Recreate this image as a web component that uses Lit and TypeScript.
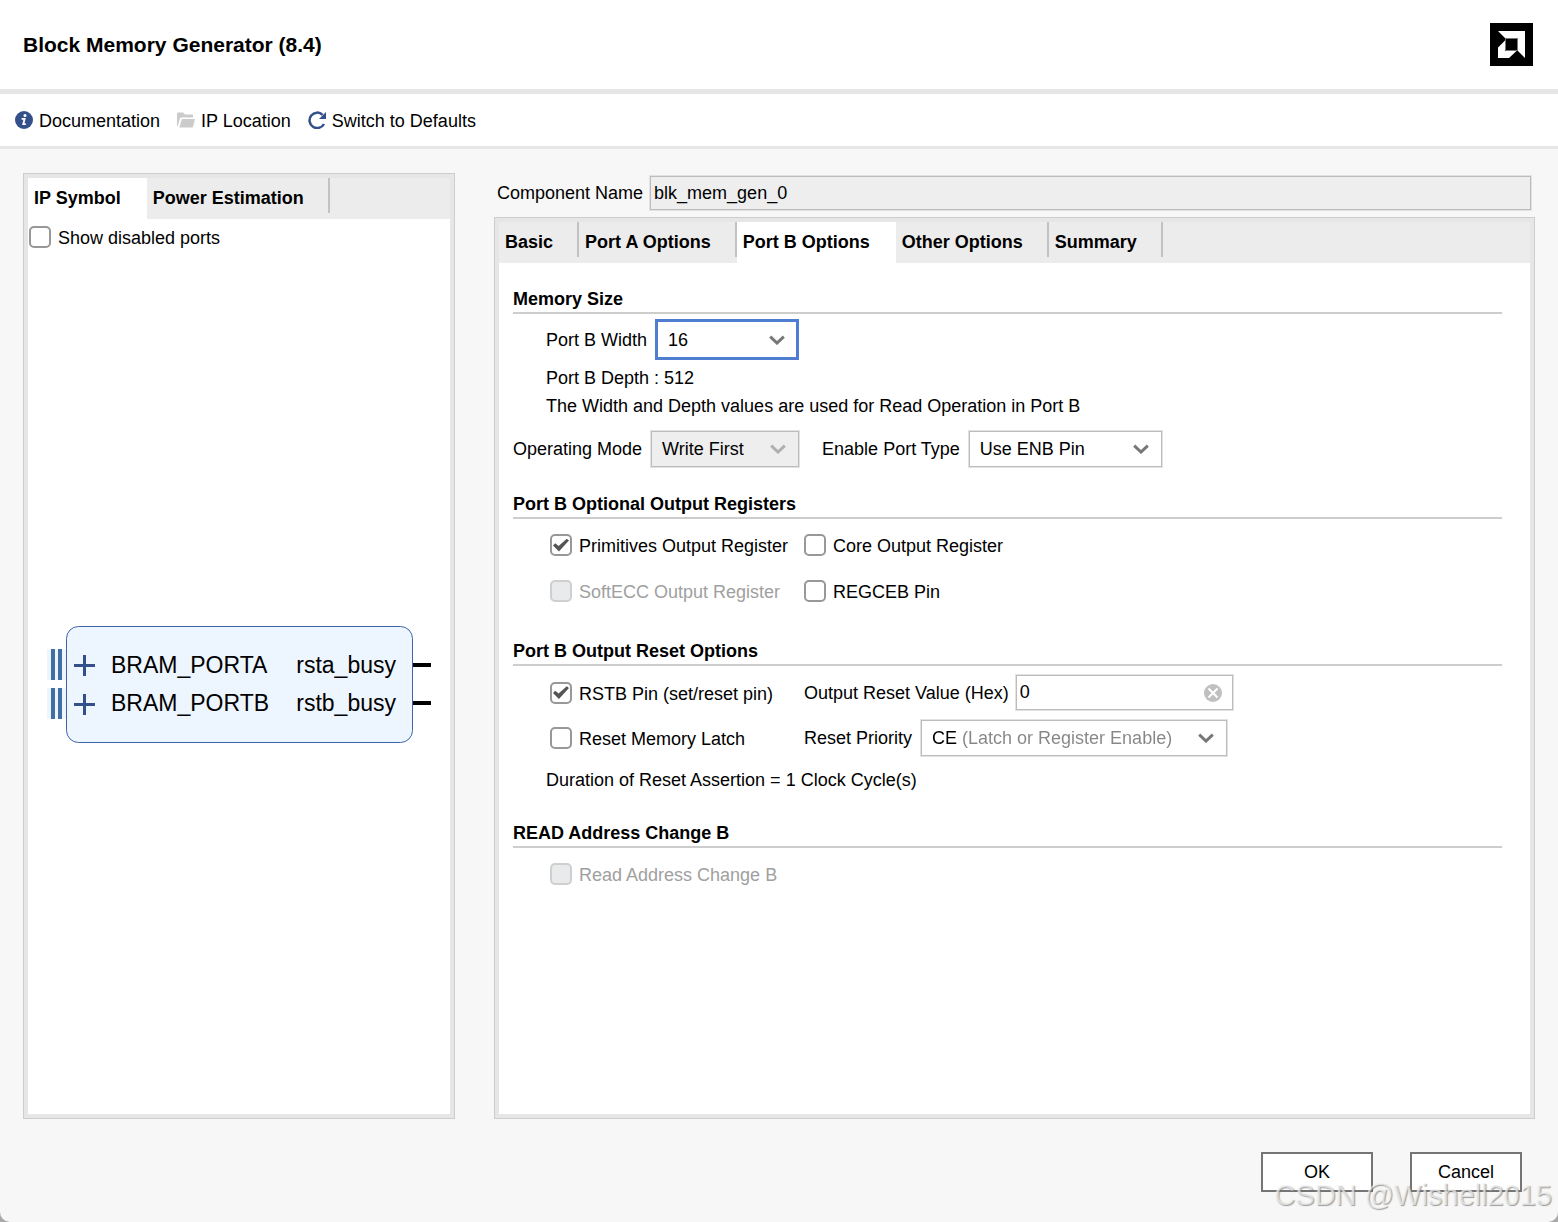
import { LitElement, html, css, svg, nothing } from "lit";
import { customElement, property, state } from "lit/decorators.js";
import { classMap } from "lit/directives/class-map.js";

const base = css`
  *,
  *::before,
  *::after {
    box-sizing: border-box;
  }
  button,
  input,
  select {
    font: inherit;
    color: inherit;
    margin: 0;
  }
`;

const fieldLine = css`
  .line {
    border: 1px solid #e2e2e2;
    box-shadow: inset 0 0 0 1px #bcbcbc;
  }
`;

@customElement("check-option")
class CheckOption extends LitElement {
  @property() label = "";
  @property({ type: Boolean }) checked = false;
  @property({ type: Boolean }) disabled = false;

  static styles = [
    base,
    css`
      :host {
        display: block;
      }
      .option {
        display: flex;
        align-items: center;
        gap: 7px;
        line-height: 24px;
        white-space: nowrap;
      }
      .text {
        padding-top: 2px;
        line-height: 22px;
      }
      .box {
        appearance: none;
        flex: none;
        width: 22px;
        height: 22px;
        border: 2px solid #989898;
        border-radius: 5px;
        background: #fff;
        display: grid;
        place-items: center;
      }
      .box:checked::before {
        content: "";
        width: 16px;
        height: 13px;
        background: #555;
        clip-path: polygon(0 54%, 14% 36%, 35% 58%, 86% 2%, 100% 16%, 37% 100%);
      }
      .box:disabled {
        background: #e9eaec;
        border-color: #cfcfcf;
      }
      .disabled {
        color: #a0a0a0;
      }
    `,
  ];

  render() {
    return html`<label class=${classMap({ option: true, disabled: this.disabled })}>
      <input
        class="box"
        type="checkbox"
        .checked=${this.checked}
        ?disabled=${this.disabled}
        @change=${(e: Event) => (this.checked = (e.target as HTMLInputElement).checked)}
      /><span class="text">${this.label}</span>
    </label>`;
  }
}

@customElement("select-field")
class SelectField extends LitElement {
  @property() label = "";
  @property({ type: Array }) options: string[] = [];
  @property({ type: Boolean }) disabled = false;
  @property({ type: Boolean }) active = false;
  @property() size = "small";
  @property({ type: Boolean }) hinted = false;

  static styles = [
    base,
    fieldLine,
    css`
      :host {
        display: block;
      }
      .row {
        display: flex;
        align-items: center;
        gap: 8px;
        white-space: nowrap;
      }
      .frame {
        display: grid;
        align-items: center;
        background: #fff;
      }
      .frame > * {
        grid-area: 1 / 1;
      }
      .small {
        width: 150px;
      }
      .medium {
        width: 195px;
      }
      .large {
        width: 308px;
      }
      .select {
        appearance: none;
        width: 100%;
        height: 38px;
        padding: 0 40px 0 11px;
        border-radius: 0;
        background: transparent;
        outline: none;
        opacity: 1;
      }
      .select:disabled {
        background: #eee;
        color: #000;
      }
      .active {
        width: 144px;
      }
      .active .select {
        height: 41px;
        border: 3px solid #4f7dd0;
        box-shadow: none;
        padding-left: 10px;
      }
      /* The value is black, its explanation in brackets grey. */
      .hinted .select {
        background: linear-gradient(to right, #000 38px, #868686 38px);
        background-clip: text;
        -webkit-text-fill-color: transparent;
      }
      .hinted option {
        -webkit-text-fill-color: #000;
      }
      .chevron {
        justify-self: end;
        margin-right: 14px;
        pointer-events: none;
        fill: none;
        stroke: #777;
        stroke-width: 3;
      }
      .off {
        stroke: #b0b0b0;
      }
    `,
  ];

  render() {
    const frame = { frame: true, active: this.active, hinted: this.hinted, [this.size]: !this.active };
    return html`<div class="row">
      <label for="field">${this.label}</label>
      <div class=${classMap(frame)}>
        <select id="field" class="select line" ?disabled=${this.disabled}>
          ${this.options.map((o) => html`<option>${o}</option>`)}
        </select>
        <svg class=${classMap({ chevron: true, off: this.disabled })} width="16" height="10" viewBox="0 0 16 10">
          <path d="M1.2 1.6 8 8 14.8 1.6" />
        </svg>
      </div>
    </div>`;
  }
}

@customElement("tab-strip")
class TabStrip extends LitElement {
  @property({ type: Array }) tabs: string[] = [];
  @property({ type: Number }) selected = 0;

  static styles = [
    base,
    css`
      .tabs {
        display: flex;
        background: #ececec;
      }
      .tab {
        height: 41px;
        padding: 0 26px 2px 6px;
        border: 0;
        background: linear-gradient(#c2c2c2, #c2c2c2) right top / 2px 35px no-repeat;
        font-weight: bold;
        white-space: nowrap;
      }
      .selected {
        background: #fff;
      }
    `,
  ];

  render() {
    return html`<div class="tabs" role="tablist">
      ${this.tabs.map(
        (t, i) => html`<button
          class=${classMap({ tab: true, selected: i === this.selected })}
          role="tab"
          aria-selected=${i === this.selected}
          @click=${() => (this.selected = i)}
        >${t}</button>`
      )}
    </div>`;
  }
}

@customElement("app-root")
class AppRoot extends LitElement {
  @state() private resetValue = "0";

  static styles = [
    base,
    fieldLine,
    css`
      :host {
        display: block;
        background: #a8a8a8;
        color: #000;
        font: 18px/24px "Liberation Sans", Arial, sans-serif;
      }
      .dialog {
        position: relative;
        display: flex;
        flex-direction: column;
        min-height: 100vh;
        background: #f7f7f7;
        border-radius: 0 0 10px 10px;
      }
      .header {
        display: flex;
        align-items: center;
        justify-content: space-between;
        padding: 23px 25px 23px 23px;
        background: #fff;
        border-bottom: 5px solid #e6e6e6;
      }
      .title {
        margin: 0;
        font-size: 21px;
        line-height: 24px;
      }
      .logo {
        display: block;
      }
      .toolbar {
        display: flex;
        gap: 17px;
        padding: 14px 15px;
        background: #fff;
        border-bottom: 3px solid #e6e6e6;
      }
      .tool {
        display: flex;
        align-items: center;
        gap: 6px;
        padding: 0;
        border: 0;
        background: none;
        line-height: 24px;
      }
      .tool-text {
        padding-top: 2px;
        line-height: 22px;
      }
      .main {
        flex: 1;
        display: grid;
        grid-template-columns: minmax(0, 432fr) minmax(0, 1041fr);
        gap: 39px;
        padding: 24px 23px 0;
      }
      .panel {
        display: flex;
        flex-direction: column;
        flex: 1;
        border: 1px solid #cdcdcd;
        background: #fff;
        outline: 4px solid #e6e6e6;
        outline-offset: -5px;
        padding: 4px;
      }
      .ports {
        padding: 6px 1px;
      }
      .canvas {
        flex: 1;
        display: grid;
        place-items: center;
      }
      .symbol-text {
        font-size: 23px;
      }
      .config {
        display: flex;
        flex-direction: column;
        gap: 6px;
        padding-top: 2px;
      }
      .name-row {
        display: flex;
        align-items: center;
        gap: 6px;
        padding: 0 3px;
      }
      .name {
        flex: 1;
        min-width: 0;
        height: 36px;
        padding: 0 4px;
        background: #eee;
        outline: none;
      }
      .page {
        display: flex;
        flex-direction: column;
        padding: 25px 28px 25px 14px;
      }
      .heading {
        margin: 0;
        padding-bottom: 2px;
        border-bottom: 2px solid #cdcdcd;
        font-size: 18px;
        line-height: 22px;
      }
      .size {
        padding: 5px 0 0 33px;
      }
      .note {
        margin: 0;
        line-height: 28px;
      }
      .size .note:first-of-type {
        margin-top: 4px;
      }
      .modes {
        display: flex;
        gap: 22px;
        padding: 10px 0 25px;
      }
      .checks {
        display: grid;
        grid-template-columns: 254px 1fr;
        row-gap: 22px;
        padding: 14px 0 37px 37px;
      }
      .resets {
        display: grid;
        grid-template-columns: 254px 1fr;
        align-items: center;
        row-gap: 8px;
        padding: 8px 0 9px 37px;
      }
      .duration {
        padding: 0 0 28px 33px;
      }
      .hex {
        display: flex;
        align-items: center;
        gap: 6px;
        white-space: nowrap;
      }
      .entry {
        display: grid;
        align-items: center;
        width: 219px;
      }
      .entry > * {
        grid-area: 1 / 1;
      }
      .value {
        width: 100%;
        height: 37px;
        padding: 0 36px 0 4px;
        background: #fff;
        outline: none;
      }
      .clear {
        justify-self: end;
        display: grid;
        margin-right: 12px;
        padding: 0;
        border: 0;
        background: none;
      }
      .footer {
        display: flex;
        justify-content: flex-end;
        gap: 37px;
        padding: 33px 36px 30px;
      }
      .action {
        width: 112px;
        height: 40px;
        padding: 0;
        border: 2px solid #757575;
        background: #fff;
      }
      .watermark {
        position: absolute;
        right: 6px;
        bottom: 10px;
        font-size: 29px;
        line-height: 34px;
        color: rgba(245, 245, 245, 0.7);
        text-shadow: 1px 1px 1px rgba(110, 110, 110, 0.65);
        pointer-events: none;
      }
    `,
  ];

  private port(iconY: number, textY: number, left: string, right: string) {
    return svg`
      <rect x="0" y=${iconY} width="19" height="31" fill="#edf5ff" />
      <rect x="4" y=${iconY} width="4" height="31" fill="#3f6fa3" />
      <rect x="11" y=${iconY} width="4" height="31" fill="#3f6fa3" />
      <path d="M27 ${iconY + 16.5}H48M37.5 ${iconY + 6}V${iconY + 27}" stroke="#34508a" stroke-width="3" />
      <text x="64" y=${textY}>${left}</text>
      <text x="349" y=${textY} text-anchor="end">${right}</text>
      <rect x="366" y=${textY - 10} width="18" height="4" fill="#000" />`;
  }

  render() {
    return html`<div class="dialog">
      <header class="header">
        <h1 class="title">Block Memory Generator (8.4)</h1>
        <svg class="logo" width="43" height="43" viewBox="0 0 43 43">
          <rect width="43" height="43" />
          <path d="M8 8H35V35L27.5 27.5V15.5H15.5ZM15 17.5V28H26.5L19 35H8V24.5Z" fill="#fff" />
          <path d="M15.5 15.5H27.5V27.5H15.5Z" stroke="#777" stroke-width="1" />
        </svg>
      </header>

      <nav class="toolbar">
        <button class="tool">
          <svg width="18" height="18" viewBox="0 0 18 18">
            <circle cx="9" cy="9" r="9" fill="#34508a" />
            <circle cx="10" cy="4.4" r="1.5" fill="#fff" />
            <path d="M6.6 7.8H9.6L8.3 13.2H10.8" fill="none" stroke="#fff" stroke-width="1.8" />
          </svg>
          <span class="tool-text">Documentation</span>
        </button>
        <button class="tool">
          <svg width="18" height="18" viewBox="0 0 18 18" fill="#cbcbcb">
            <path d="M0 15V2.5Q0 1.5 1 1.5H6L8 3.5H15Q16 3.5 16 4.5V6.5H4.5Q3.4 6.5 3 7.6L0.8 15Z" />
            <path d="M4.8 8H18L16.2 15.2Q16 16.5 14.8 16.5H2.4Z" />
          </svg>
          <span class="tool-text">IP Location</span>
        </button>
        <button class="tool">
          <svg width="18" height="18" viewBox="0 0 18 18">
            <path d="M16 13A7.7 7.7 0 1 1 14.6 3.8" fill="none" stroke="#34508a" stroke-width="2.5" />
            <path d="M18 1V8H11Z" fill="#34508a" />
          </svg>
          <span class="tool-text">Switch to Defaults</span>
        </button>
      </nav>

      <main class="main">
        <section class="panel">
          <tab-strip .tabs=${["IP Symbol", "Power Estimation"]}></tab-strip>
          <check-option class="ports" label="Show disabled ports"></check-option>
          <div class="canvas">
            <svg width="384" height="117" viewBox="0 0 384 117">
              <rect x="19.5" y="0.5" width="346" height="116" rx="12" fill="#edf5ff" stroke="#3e65a8" />
              <g class="symbol-text">
                ${this.port(23, 47, "BRAM_PORTA", "rsta_busy")} ${this.port(62, 85, "BRAM_PORTB", "rstb_busy")}
              </g>
            </svg>
          </div>
        </section>

        <div class="config">
          <div class="name-row">
            <label for="name">Component Name</label>
            <input id="name" class="name line" type="text" value="blk_mem_gen_0" readonly />
          </div>
          <section class="panel">
            <tab-strip
              .tabs=${["Basic", "Port A Options", "Port B Options", "Other Options", "Summary"]}
              .selected=${2}
            ></tab-strip>
            <div class="page">
              <h2 class="heading">Memory Size</h2>
              <div class="size">
                <select-field label="Port B Width" active .options=${["16", "32", "64"]}></select-field>
                <p class="note">Port B Depth : 512</p>
                <p class="note">The Width and Depth values are used for Read Operation in Port B</p>
              </div>
              <div class="modes">
                <select-field label="Operating Mode" disabled .options=${["Write First"]}></select-field>
                <select-field
                  label="Enable Port Type"
                  size="medium"
                  .options=${["Use ENB Pin", "Always Enabled"]}
                ></select-field>
              </div>

              <h2 class="heading">Port B Optional Output Registers</h2>
              <div class="checks">
                <check-option label="Primitives Output Register" checked></check-option>
                <check-option label="Core Output Register"></check-option>
                <check-option label="SoftECC Output Register" disabled></check-option>
                <check-option label="REGCEB Pin"></check-option>
              </div>

              <h2 class="heading">Port B Output Reset Options</h2>
              <div class="resets">
                <check-option label="RSTB Pin (set/reset pin)" checked></check-option>
                <div class="hex">
                  <label for="hex">Output Reset Value (Hex)</label>
                  <div class="entry">
                    <input
                      id="hex"
                      class="value line"
                      type="text"
                      .value=${this.resetValue}
                      @input=${(e: Event) => (this.resetValue = (e.target as HTMLInputElement).value)}
                    />
                    ${this.resetValue
                      ? html`<button class="clear" aria-label="Clear" @click=${() => (this.resetValue = "")}>
                          <svg width="18" height="18" viewBox="0 0 18 18">
                            <circle cx="9" cy="9" r="9" fill="#c0c0c0" />
                            <path d="M4.5 4.5 13.5 13.5M13.5 4.5 4.5 13.5" stroke="#fff" stroke-width="2" />
                          </svg>
                        </button>`
                      : nothing}
                  </div>
                </div>
                <check-option label="Reset Memory Latch"></check-option>
                <select-field
                  label="Reset Priority"
                  size="large"
                  hinted
                  .options=${["CE (Latch or Register Enable)", "SR (Set or Reset)"]}
                ></select-field>
              </div>
              <p class="note duration">Duration of Reset Assertion = 1 Clock Cycle(s)</p>

              <h2 class="heading">READ Address Change B</h2>
              <div class="checks">
                <check-option label="Read Address Change B" disabled></check-option>
              </div>
            </div>
          </section>
        </div>
      </main>

      <footer class="footer">
        <button class="action">OK</button>
        <button class="action">Cancel</button>
      </footer>
      <div class="watermark">CSDN @Wishell2015</div>
    </div>`;
  }
}
